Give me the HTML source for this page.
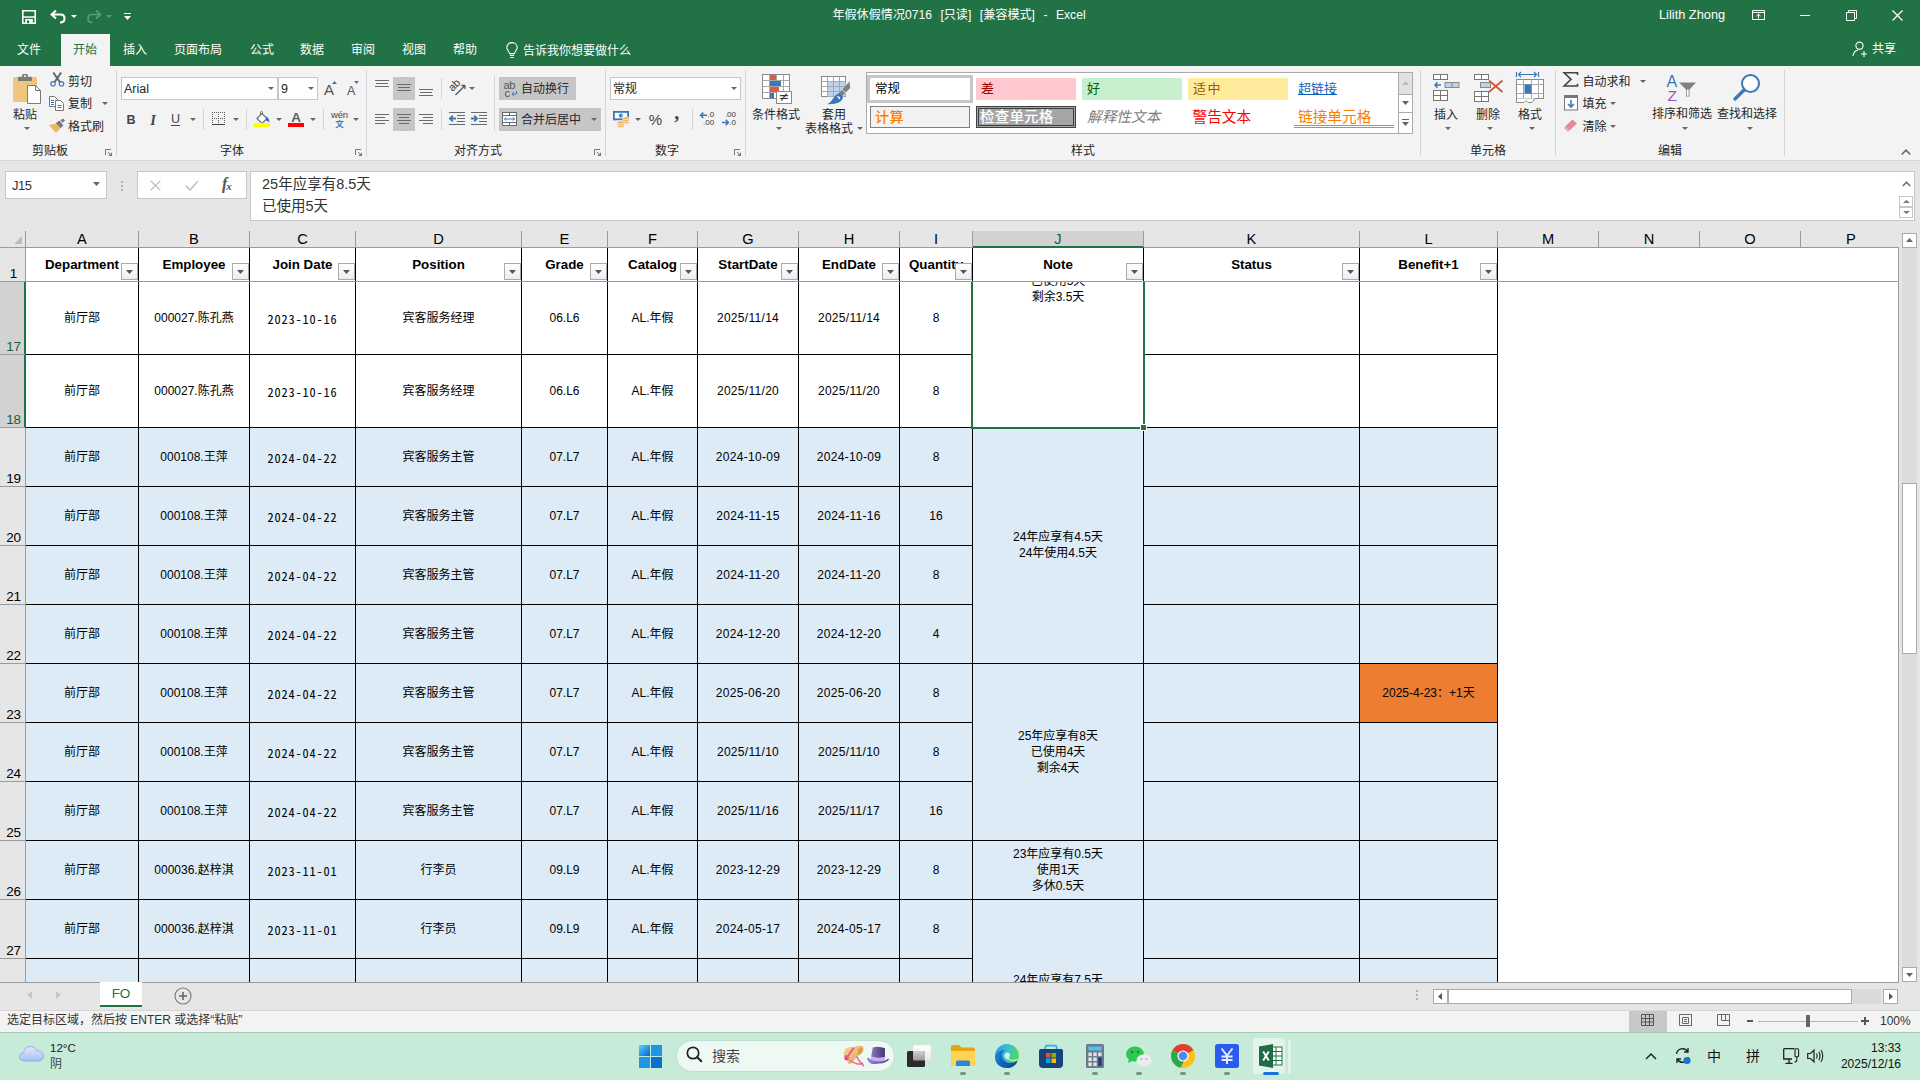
<!DOCTYPE html>
<html lang="zh-CN"><head><meta charset="utf-8"><title>年假休假情况0716 - Excel</title>
<style>
html,body{margin:0;padding:0;}
body{width:1920px;height:1080px;overflow:hidden;background:#e6e6e6;font-family:"Liberation Sans","Noto Sans CJK SC",sans-serif;font-size:12px;color:#000;}
#app{position:relative;width:1920px;height:1080px;overflow:hidden;}
.a{position:absolute;}
.t{position:absolute;white-space:nowrap;}
.c{text-align:center;}
.ui{font-family:"Liberation Sans","Noto Sans CJK SC",sans-serif;color:#262626;}
svg{position:absolute;overflow:visible;}
.jd{font-family:"Noto Sans Mono CJK SC","DejaVu Sans Mono",monospace;font-size:12.3px;letter-spacing:0.85px;}

</style></head>
<body>
<div id="app">
<!-- p_top -->
<div class="a" style="left:0;top:0;width:1920px;height:66px;background:#217346"></div>
<svg style="left:22px;top:10px" width="14" height="14" viewBox="0 0 14 14"><path d="M0.8 0.8H13.2V13.2H0.8Z" fill="none" stroke="#fff" stroke-width="1.6"/><rect x="1" y="6.3" width="12" height="1.5" fill="#fff"/><rect x="3.2" y="9" width="7.6" height="4" fill="#fff"/><rect x="5" y="10.5" width="2.2" height="2.7" fill="#217346"/></svg>
<svg style="left:50px;top:9px" width="18" height="16" viewBox="0 0 18 16"><path d="M6 1.5L1.5 5.5L6 9.5 M2 5.5H10.5C13.5 5.5 14.5 7.5 14.5 9.5C14.5 12 12.5 13.5 10 13.5" fill="none" stroke="#fff" stroke-width="2"/></svg>
<svg style="left:71px;top:15px" width="6" height="3"><path d="M0 0H6L3 3Z" fill="#fff"/></svg>
<svg style="left:85px;top:9px" width="18" height="16" viewBox="0 0 18 16"><path d="M11 1.5L15.5 5.5L11 9.5 M15 5.5H7C4 5.5 3 7.5 3 9.5C3 12 5 13.5 7.5 13.5" fill="none" stroke="#5c9a78" stroke-width="1.7"/></svg>
<svg style="left:106px;top:15px" width="6" height="3"><path d="M0 0H6L3 3Z" fill="#5c9a78"/></svg>
<div class="a" style="left:124px;top:13px;width:7px;height:1px;background:#fff"></div>
<svg style="left:124px;top:16px" width="7" height="4"><path d="M0 0H7L3.5 4Z" fill="#fff"/></svg>
<div class="t c" style="left:659px;top:5px;width:600px;height:20px;line-height:20px;font-size:12.1px;color:#fff;word-spacing:0.9px">年假休假情况0716&nbsp; [只读]&nbsp; [兼容模式]&nbsp; -&nbsp; Excel</div>
<div class="t" style="left:1659px;top:5px;height:20px;line-height:20px;font-size:12.8px;color:#fff">Lilith Zhong</div>
<svg style="left:1752px;top:10px" width="13" height="10" viewBox="0 0 13 10"><path d="M0.5 0.5H12.5V9.5H0.5Z M0.5 2.5H12.5" fill="none" stroke="#fff" stroke-width="1"/><path d="M6.5 4.2V8.5M4.5 6L6.5 4.2L8.5 6" fill="none" stroke="#fff" stroke-width="1"/></svg>
<div class="a" style="left:1800px;top:15px;width:10px;height:1px;background:#fff"></div>
<svg style="left:1846px;top:10px" width="11" height="11" viewBox="0 0 11 11"><path d="M0.5 2.5H8.5V10.5H0.5Z M2.5 2.5V0.5H10.5V8.5H8.5" fill="none" stroke="#fff" stroke-width="1"/></svg>
<svg style="left:1892px;top:10px" width="11" height="11" viewBox="0 0 11 11"><path d="M0.5 0.5L10.5 10.5M10.5 0.5L0.5 10.5" fill="none" stroke="#fff" stroke-width="1.2"/></svg>
<div class="a" style="left:61px;top:34px;width:49px;height:32px;background:#f3f3f3"></div>
<div class="t c" style="left:-11px;top:40px;width:80px;height:20px;line-height:20px;font-size:12px;color:#fff">文件</div>
<div class="t c" style="left:45px;top:40px;width:80px;height:20px;line-height:20px;font-size:12px;color:#217346">开始</div>
<div class="t c" style="left:95px;top:40px;width:80px;height:20px;line-height:20px;font-size:12px;color:#fff">插入</div>
<div class="t c" style="left:158px;top:40px;width:80px;height:20px;line-height:20px;font-size:12px;color:#fff">页面布局</div>
<div class="t c" style="left:222px;top:40px;width:80px;height:20px;line-height:20px;font-size:12px;color:#fff">公式</div>
<div class="t c" style="left:272px;top:40px;width:80px;height:20px;line-height:20px;font-size:12px;color:#fff">数据</div>
<div class="t c" style="left:323px;top:40px;width:80px;height:20px;line-height:20px;font-size:12px;color:#fff">审阅</div>
<div class="t c" style="left:374px;top:40px;width:80px;height:20px;line-height:20px;font-size:12px;color:#fff">视图</div>
<div class="t c" style="left:425px;top:40px;width:80px;height:20px;line-height:20px;font-size:12px;color:#fff">帮助</div>
<svg style="left:505.5px;top:42px" width="12" height="17" viewBox="0 0 12 17"><path d="M6 0.6C3 0.6 0.8 2.8 0.8 5.5C0.8 8 3 9 3.6 11.6H8.4C9 9 11.2 8 11.2 5.5C11.2 2.8 9 0.6 6 0.6Z M3.8 13.5H8.2 M4.4 15.5H7.6" fill="none" stroke="#fff" stroke-width="1.1"/></svg>
<div class="t" style="left:523px;top:41px;height:20px;line-height:20px;font-size:12px;color:#fff">告诉我你想要做什么</div>
<svg style="left:1852px;top:41px" width="16" height="16" viewBox="0 0 16 16"><circle cx="7.5" cy="4.7" r="3.6" fill="none" stroke="#fff" stroke-width="1.1"/><path d="M1 15C1.5 11.5 3.5 9.5 6 9" fill="none" stroke="#fff" stroke-width="1.1"/><path d="M12 10V16M9 13H15" stroke="#fff" stroke-width="1.1"/></svg>
<div class="t" style="left:1872px;top:39px;height:20px;line-height:20px;font-size:12px;color:#fff">共享</div>
<!-- p_ribbon -->
<div class="a" style="left:0px;top:66px;width:1920px;height:94px;background:#f3f3f3"></div>
<div class="a" style="left:0px;top:160px;width:1920px;height:1px;background:#d6d6d6"></div>
<svg style="left:13px;top:74px" width="29" height="31" viewBox="0 0 29 31"><rect x="0" y="3" width="24" height="25" rx="1.5" fill="#eec67c"/><path d="M5 7V3.6Q5 2.8 5.8 2.8H9.2V1.2Q9.2 0 10.4 0H13.6Q14.8 0 14.8 1.2V2.8H18.2Q19 2.8 19 3.6V7Z" fill="#7a7a7a"/><rect x="11" y="1.3" width="2" height="1.6" fill="#f3f3f3"/><path d="M14.5 11.5H22.5L27.5 16.5V29.5H14.5Z" fill="#fff" stroke="#7a7a7a" stroke-width="1"/><path d="M22.5 11.5V16.5H27.5" fill="none" stroke="#7a7a7a" stroke-width="1"/></svg>
<div class="t c" style="left:-35px;top:106.6px;width:120px;height:16px;line-height:16px;font-size:12px;color:#262626;">粘贴</div>
<svg style="left:23.5px;top:127px" width="6" height="3"><path d="M0 0H6L3 3Z" fill="#666"/></svg>
<svg style="left:50px;top:72px" width="15" height="15" viewBox="0 0 15 15"><path d="M3.3 0.5L10.2 10.5M11.2 0.5L4.3 10.5" stroke="#666" stroke-width="2" fill="none"/><circle cx="3" cy="11.8" r="2.2" fill="none" stroke="#3b78b9" stroke-width="1.2"/><circle cx="11.5" cy="11.8" r="2.2" fill="none" stroke="#3b78b9" stroke-width="1.2"/></svg>
<div class="t" style="left:68px;top:73.6px;height:16px;line-height:16px;font-size:12px;color:#262626;">剪切</div>
<svg style="left:49px;top:96px" width="16" height="15" viewBox="0 0 16 15"><path d="M0.5 0.5H5.5L8.5 3.5V10.5H0.5Z" fill="#fff" stroke="#777"/><path d="M6.5 4.5H11.5L14.5 7.5V14.5H6.5Z" fill="#fff" stroke="#777"/><path d="M2 4.5H5M2 6.5H5M2 8.5H5" stroke="#3b78b9"/><path d="M8.5 9.5H12.5M8.5 11.5H12.5" stroke="#3b78b9"/></svg>
<div class="t" style="left:68px;top:96.1px;height:16px;line-height:16px;font-size:12px;color:#262626;">复制</div>
<svg style="left:101.5px;top:102px" width="6" height="3"><path d="M0 0H6L3 3Z" fill="#666"/></svg>
<svg style="left:49px;top:119px" width="17" height="15" viewBox="0 0 17 15"><path d="M0 6L7.3 4.4L11.3 9.5L6.9 13.9Z" fill="#eab765"/><path d="M6.8 4.1L10.4 1.5L14.4 6.5L11.4 9.3Z" fill="#7a7a7a"/><path d="M11.4 1.3L14.2 -0.4L16 1.8L13.3 3.8Z" fill="#7a7a7a"/></svg>
<div class="t" style="left:68px;top:119.1px;height:16px;line-height:16px;font-size:12px;color:#262626;">格式刷</div>
<div class="t c" style="left:-10px;top:142.8px;width:120px;height:16px;line-height:16px;font-size:12px;color:#262626;">剪贴板</div>
<svg style="left:105px;top:149px" width="8" height="8" viewBox="0 0 8 8"><path d="M0.5 6V0.5H6" fill="none" stroke="#777" stroke-width="1"/><path d="M7 3.2V7H3.2Z" fill="#777"/><path d="M3 3L5 5" stroke="#777" stroke-width="1"/></svg>
<div class="a" style="left:116px;top:70px;width:1px;height:86px;background:#d4d4d4"></div>
<div class="a" style="left:121px;top:77px;width:157px;height:23px;background:#fff;border:1px solid #c6c6c6;box-sizing:border-box"></div>
<div class="t" style="left:124px;top:81.1px;height:16px;line-height:16px;font-size:12.5px;color:#262626;">Arial</div>
<svg style="left:267.5px;top:87px" width="6" height="3"><path d="M0 0H6L3 3Z" fill="#666"/></svg>
<div class="a" style="left:278px;top:77px;width:40px;height:23px;background:#fff;border:1px solid #c6c6c6;box-sizing:border-box"></div>
<div class="t" style="left:281px;top:81.1px;height:16px;line-height:16px;font-size:12.5px;color:#262626;">9</div>
<svg style="left:307.5px;top:87px" width="6" height="3"><path d="M0 0H6L3 3Z" fill="#666"/></svg>
<div class="t" style="left:324px;top:82.1px;height:16px;line-height:16px;font-size:15px;color:#555;">A</div>
<svg style="left:332px;top:81px" width="5" height="3" viewBox="0 0 5 3"><path d="M0 3H5L2.5 0Z" fill="#3b78b9"/></svg>
<div class="t" style="left:347px;top:83.1px;height:16px;line-height:16px;font-size:12.5px;color:#555;">A</div>
<svg style="left:354px;top:81px" width="5" height="3" viewBox="0 0 5 3"><path d="M0 0H5L2.5 3Z" fill="#3b78b9"/></svg>
<div class="t c" style="left:121px;top:111.6px;width:20px;height:16px;line-height:16px;font-size:12.5px;color:#444;font-weight:bold">B</div>
<div class="t c" style="left:143px;top:111.6px;width:20px;height:16px;line-height:16px;font-size:14.5px;color:#444;font-style:italic;font-family:'Liberation Serif',serif;font-weight:bold">I</div>
<div class="t c" style="left:165.5px;top:111.1px;width:20px;height:16px;line-height:16px;font-size:12.5px;color:#444;">U</div>
<div class="a" style="left:171px;top:125px;width:9px;height:1px;background:#444"></div>
<svg style="left:189.5px;top:118px" width="6" height="3"><path d="M0 0H6L3 3Z" fill="#666"/></svg>
<div class="a" style="left:203px;top:109px;width:1px;height:21px;background:#d4d4d4"></div>
<svg style="left:212px;top:112px" width="14" height="14" viewBox="0 0 14 14"><path d="M0 0h1v1h-1zM0 10h1v1h-1zM0 12h1v1h-1zM0 2h1v1h-1zM0 4h1v1h-1zM0 6h1v1h-1zM0 8h1v1h-1zM10 0h1v1h-1zM10 6h1v1h-1zM12 0h1v1h-1zM12 10h1v1h-1zM12 12h1v1h-1zM12 2h1v1h-1zM12 4h1v1h-1zM12 6h1v1h-1zM12 8h1v1h-1zM2 0h1v1h-1zM2 6h1v1h-1zM4 0h1v1h-1zM4 6h1v1h-1zM6 0h1v1h-1zM6 10h1v1h-1zM6 12h1v1h-1zM6 2h1v1h-1zM6 4h1v1h-1zM6 6h1v1h-1zM6 8h1v1h-1zM8 0h1v1h-1zM8 6h1v1h-1z" fill="#5a5a5a"/><rect x="0" y="12" width="13" height="1" fill="#444"/></svg>
<svg style="left:232.5px;top:118px" width="6" height="3"><path d="M0 0H6L3 3Z" fill="#666"/></svg>
<div class="a" style="left:246px;top:109px;width:1px;height:21px;background:#d4d4d4"></div>
<svg style="left:254px;top:111px" width="17" height="17" viewBox="0 0 17 17"><path d="M3 7.5L8 2.5L13 7.5L8 12.5Z" fill="#fff" stroke="#6a6a6a" stroke-width="1.1"/><path d="M6.5 4V1.5Q6.5 0.5 7.5 0.5Q8.5 0.5 8.5 1.5V3" fill="none" stroke="#6a6a6a" stroke-width="1"/><path d="M12 5.5Q16 7 15.2 11.5Q13.5 9.5 11.5 9.5Z" fill="#3b78b9"/><rect x="0" y="12" width="16" height="4" fill="#ffff00"/></svg>
<svg style="left:275.5px;top:118px" width="6" height="3"><path d="M0 0H6L3 3Z" fill="#666"/></svg>
<div class="t c" style="left:286px;top:109.8px;width:20px;height:16px;line-height:16px;font-size:13.5px;color:#5f5f5f;font-weight:bold">A</div>
<div class="a" style="left:288px;top:123px;width:16px;height:4px;background:#ff0000"></div>
<svg style="left:309.5px;top:118px" width="6" height="3"><path d="M0 0H6L3 3Z" fill="#666"/></svg>
<div class="a" style="left:323px;top:109px;width:1px;height:21px;background:#d4d4d4"></div>
<div class="t c" style="left:324.5px;top:107.1px;width:30px;height:16px;line-height:16px;font-size:9.5px;color:#3f3f3f;letter-spacing:-0.2px">wén</div>
<div class="t c" style="left:324.5px;top:115.8px;width:30px;height:16px;line-height:16px;font-size:8.5px;color:#3b78b9;font-weight:bold">文</div>
<svg style="left:352.5px;top:118px" width="6" height="3"><path d="M0 0H6L3 3Z" fill="#666"/></svg>
<div class="t c" style="left:172px;top:142.8px;width:120px;height:16px;line-height:16px;font-size:12px;color:#262626;">字体</div>
<svg style="left:355px;top:149px" width="8" height="8" viewBox="0 0 8 8"><path d="M0.5 6V0.5H6" fill="none" stroke="#777" stroke-width="1"/><path d="M7 3.2V7H3.2Z" fill="#777"/><path d="M3 3L5 5" stroke="#777" stroke-width="1"/></svg>
<div class="a" style="left:366px;top:70px;width:1px;height:86px;background:#d4d4d4"></div>
<div class="a" style="left:393px;top:77px;width:22px;height:23px;background:#c6c6c6"></div>
<div class="a" style="left:393px;top:108px;width:22px;height:23px;background:#c6c6c6"></div>
<div class="a" style="left:375px;top:80px;width:14px;height:1px;background:#6a6a6a"></div>
<div class="a" style="left:376px;top:83px;width:12px;height:1px;background:#6a6a6a"></div>
<div class="a" style="left:375px;top:86px;width:14px;height:1px;background:#6a6a6a"></div>
<div class="a" style="left:397px;top:84px;width:14px;height:1px;background:#6a6a6a"></div>
<div class="a" style="left:398px;top:87px;width:12px;height:1px;background:#6a6a6a"></div>
<div class="a" style="left:397px;top:90px;width:14px;height:1px;background:#6a6a6a"></div>
<div class="a" style="left:419px;top:89px;width:14px;height:1px;background:#6a6a6a"></div>
<div class="a" style="left:420px;top:92px;width:12px;height:1px;background:#6a6a6a"></div>
<div class="a" style="left:419px;top:95px;width:14px;height:1px;background:#6a6a6a"></div>
<div class="a" style="left:441px;top:78px;width:1px;height:21px;background:#d4d4d4"></div>
<svg style="left:448px;top:78px" width="20" height="20" viewBox="0 0 20 20"><path d="M7.5 17L17 7.5M17 7.5H13.4M17 7.5V11.1" stroke="#555" stroke-width="1.3" fill="none"/><text x="0" y="0" font-size="11" font-family="Liberation Sans" fill="#3b3b3b" transform="translate(4.4,14) rotate(-45)">ab</text></svg>
<svg style="left:468.5px;top:87px" width="6" height="3"><path d="M0 0H6L3 3Z" fill="#666"/></svg>
<div class="a" style="left:494px;top:76px;width:1px;height:55px;background:#d4d4d4"></div>
<div class="a" style="left:499px;top:77px;width:77px;height:23px;background:#c6c6c6"></div>
<div class="t" style="left:503.5px;top:77.1px;height:16px;line-height:16px;font-size:11px;color:#555;letter-spacing:-0.3px">ab</div>
<div class="t" style="left:504.5px;top:85.1px;height:16px;line-height:16px;font-size:11px;color:#555;">c</div>
<svg style="left:510.5px;top:90.5px" width="6" height="5" viewBox="0 0 6 5"><path d="M5.5 0V3H1.5M3 1.2L1 3L3 4.8" stroke="#3b78b9" stroke-width="1" fill="none"/></svg>
<div class="t" style="left:521px;top:81.1px;height:16px;line-height:16px;font-size:12px;color:#262626;">自动换行</div>
<div class="a" style="left:375px;top:114px;width:14px;height:1px;background:#6a6a6a"></div>
<div class="a" style="left:375px;top:117px;width:10px;height:1px;background:#6a6a6a"></div>
<div class="a" style="left:375px;top:120px;width:14px;height:1px;background:#6a6a6a"></div>
<div class="a" style="left:375px;top:123px;width:10px;height:1px;background:#6a6a6a"></div>
<div class="a" style="left:397px;top:114px;width:14px;height:1px;background:#6a6a6a"></div>
<div class="a" style="left:399px;top:117px;width:10px;height:1px;background:#6a6a6a"></div>
<div class="a" style="left:397px;top:120px;width:14px;height:1px;background:#6a6a6a"></div>
<div class="a" style="left:399px;top:123px;width:10px;height:1px;background:#6a6a6a"></div>
<div class="a" style="left:419px;top:114px;width:14px;height:1px;background:#6a6a6a"></div>
<div class="a" style="left:423px;top:117px;width:10px;height:1px;background:#6a6a6a"></div>
<div class="a" style="left:419px;top:120px;width:14px;height:1px;background:#6a6a6a"></div>
<div class="a" style="left:423px;top:123px;width:10px;height:1px;background:#6a6a6a"></div>
<div class="a" style="left:441px;top:109px;width:1px;height:21px;background:#d4d4d4"></div>
<svg style="left:449px;top:112px" width="17" height="14" viewBox="0 0 17 14"><path d="M0 0.5H16M8 3.5H16M8 6.5H16M8 9.5H16M0 12.5H16" stroke="#6a6a6a" stroke-width="1"/><path d="M7 6.5H1M3.8 3.6L0.9 6.5L3.8 9.4" stroke="#3b78b9" stroke-width="1.8" fill="none"/></svg>
<svg style="left:471px;top:112px" width="17" height="14" viewBox="0 0 17 14"><path d="M0 0.5H16M8 3.5H16M8 6.5H16M8 9.5H16M0 12.5H16" stroke="#6a6a6a" stroke-width="1"/><path d="M0 6.5H6M3.2 3.6L6.1 6.5L3.2 9.4" stroke="#3b78b9" stroke-width="1.8" fill="none"/></svg>
<div class="a" style="left:499px;top:108px;width:102px;height:23px;background:#c6c6c6"></div>
<svg style="left:502px;top:112px" width="15" height="14" viewBox="0 0 15 14"><rect x="0.5" y="0.5" width="14" height="13" fill="#fff" stroke="#6a6a6a"/><path d="M0.5 3.5H14.5M0.5 10.5H14.5M7.5 0.5V3.5M7.5 10.5V13.5" stroke="#6a6a6a"/><path d="M2.5 7H12.5M4.3 5.3L2.5 7L4.3 8.7M10.7 5.3L12.5 7L10.7 8.7" stroke="#3b78b9" stroke-width="1" fill="none"/></svg>
<div class="t" style="left:521px;top:112.1px;height:16px;line-height:16px;font-size:12px;color:#262626;">合并后居中</div>
<svg style="left:590.5px;top:118px" width="6" height="3"><path d="M0 0H6L3 3Z" fill="#666"/></svg>
<div class="t c" style="left:418px;top:142.8px;width:120px;height:16px;line-height:16px;font-size:12px;color:#262626;">对齐方式</div>
<svg style="left:594px;top:149px" width="8" height="8" viewBox="0 0 8 8"><path d="M0.5 6V0.5H6" fill="none" stroke="#777" stroke-width="1"/><path d="M7 3.2V7H3.2Z" fill="#777"/><path d="M3 3L5 5" stroke="#777" stroke-width="1"/></svg>
<div class="a" style="left:605px;top:70px;width:1px;height:86px;background:#d4d4d4"></div>
<div class="a" style="left:610px;top:77px;width:131px;height:23px;background:#fff;border:1px solid #c6c6c6;box-sizing:border-box"></div>
<div class="t" style="left:613px;top:81.1px;height:16px;line-height:16px;font-size:12px;color:#262626;">常规</div>
<svg style="left:730.5px;top:87px" width="6" height="3"><path d="M0 0H6L3 3Z" fill="#666"/></svg>
<svg style="left:613px;top:111px" width="17" height="17" viewBox="0 0 17 17"><rect x="0.9" y="0.9" width="14.2" height="7.4" fill="#fff" stroke="#3b78b9" stroke-width="1.8"/><path d="M0 0H2.6L0 2.6ZM16 0H13.4L16 2.6ZM0 9.2H2.6L0 6.6Z" fill="#3b78b9"/><circle cx="8" cy="4.6" r="2.1" fill="#3b78b9"/><path d="M8.6 3.6A1 1 0 1 1 8.6 5.6" fill="#fff"/><g fill="#eab765" stroke="#f3f3f3" stroke-width=".6"><ellipse cx="12.7" cy="11.3" rx="3.5" ry="1.4"/><ellipse cx="12.7" cy="9.3" rx="3.5" ry="1.4"/><ellipse cx="12.7" cy="7.3" rx="3.5" ry="1.4"/><ellipse cx="7.7" cy="15.2" rx="3.5" ry="1.4"/><ellipse cx="7.7" cy="13.2" rx="3.5" ry="1.4"/><ellipse cx="7.7" cy="11.4" rx="3.5" ry="1.4"/></g></svg>
<svg style="left:634.5px;top:118px" width="6" height="3"><path d="M0 0H6L3 3Z" fill="#666"/></svg>
<div class="t c" style="left:645.5px;top:112.1px;width:20px;height:16px;line-height:16px;font-size:15px;color:#444;">%</div>
<div class="t c" style="left:670.5px;top:114.9px;width:12px;height:16px;line-height:16px;font-size:20px;color:#444;font-weight:bold;font-family:'Liberation Serif',serif">’</div>
<div class="a" style="left:692px;top:109px;width:1px;height:21px;background:#d4d4d4"></div>
<svg style="left:700px;top:111px" width="15" height="16" viewBox="0 0 15 16"><path d="M0.6 4.3H7M3.3 1.6L0.6 4.3L3.3 7" stroke="#3b78b9" stroke-width="1.5" fill="none"/><text x="14.2" y="6.3" font-size="8" text-anchor="end" font-family="Liberation Sans" fill="#333">.0</text><text x="14.2" y="13.9" font-size="8" text-anchor="end" font-family="Liberation Sans" fill="#333">.00</text></svg>
<svg style="left:722px;top:111px" width="15" height="16" viewBox="0 0 15 16"><text x="14" y="6.3" font-size="8" text-anchor="end" font-family="Liberation Sans" fill="#333">.00</text><path d="M0 11.4H6.4M3.7 8.7L6.4 11.4L3.7 14.1" stroke="#3b78b9" stroke-width="1.5" fill="none"/><text x="14" y="13.9" font-size="8" text-anchor="end" font-family="Liberation Sans" fill="#333">.0</text></svg>
<div class="t c" style="left:607px;top:142.8px;width:120px;height:16px;line-height:16px;font-size:12px;color:#262626;">数字</div>
<svg style="left:734px;top:149px" width="8" height="8" viewBox="0 0 8 8"><path d="M0.5 6V0.5H6" fill="none" stroke="#777" stroke-width="1"/><path d="M7 3.2V7H3.2Z" fill="#777"/><path d="M3 3L5 5" stroke="#777" stroke-width="1"/></svg>
<div class="a" style="left:745px;top:70px;width:1px;height:86px;background:#d4d4d4"></div>
<svg style="left:762px;top:74px" width="31" height="30" viewBox="0 0 31 30"><rect x="0.5" y="0.5" width="27" height="24" fill="#fff" stroke="#8a8a8a"/><path d="M7.5 0.5V24.5M14.5 0.5V24.5M21.5 0.5V24.5M0.5 6.5H27.5M0.5 12.5H27.5M0.5 18.5H27.5" stroke="#a8a8a8"/><rect x="8" y="1" width="6" height="5" fill="#d95f43"/><rect x="8" y="7" width="11" height="5" fill="#3b78b9"/><rect x="8" y="13" width="9" height="5" fill="#d95f43"/><rect x="8" y="19" width="4" height="5" fill="#3b78b9"/><rect x="14.5" y="17.5" width="15" height="12" fill="#fff" stroke="#8a8a8a"/><text x="22" y="27.4" font-size="12.5" text-anchor="middle" font-family="DejaVu Sans" fill="#333">≠</text></svg>
<div class="t c" style="left:716px;top:106.6px;width:120px;height:16px;line-height:16px;font-size:12px;color:#262626;">条件格式</div>
<svg style="left:775.5px;top:127px" width="6" height="3"><path d="M0 0H6L3 3Z" fill="#666"/></svg>
<svg style="left:821px;top:76px" width="30" height="29" viewBox="0 0 30 29"><rect x="0.5" y="0.5" width="24" height="20" fill="#fff" stroke="#8a8a8a"/><rect x="6.5" y="5.5" width="18" height="15" fill="#bdd3ec"/><path d="M6.5 0.5V20.5M12.5 0.5V20.5M18.5 0.5V20.5M0.5 5.5H24.5M0.5 10.5H24.5M0.5 15.5H24.5" stroke="#a8a8a8"/><path d="M28.4 5.6L29.2 12L21.6 19.6L18.3 16.9Z" fill="#808080"/><path d="M21.2 13.6L24.8 17.2" stroke="#f3f3f3" stroke-width="0.9"/><path d="M18.3 16.9Q14 18.5 12 22.5Q10 26.5 6.3 28.2Q15 28.6 19.5 25.5Q22.5 23 21.6 19.6Z" fill="#3b78b9"/><path d="M15.6 20.6Q17.5 19.6 19 21.2Q19.4 22.8 18.6 23.6Q17.6 22 15.6 20.6Z" fill="#fff"/></svg>
<div class="t c" style="left:774px;top:106.6px;width:120px;height:16px;line-height:16px;font-size:12px;color:#262626;">套用</div>
<div class="t c" style="left:769px;top:120.6px;width:120px;height:16px;line-height:16px;font-size:12px;color:#262626;">表格格式</div>
<svg style="left:856.5px;top:127px" width="6" height="3"><path d="M0 0H6L3 3Z" fill="#666"/></svg>
<div class="a" style="left:866px;top:72px;width:547px;height:62px;background:#fff;border:1px solid #ababab;box-sizing:border-box"></div>
<div class="a" style="left:1398px;top:72px;width:1px;height:62px;background:#ababab"></div>
<div class="a" style="left:1399px;top:73px;width:13px;height:21px;background:#e1e1e1"></div>
<div class="a" style="left:1399px;top:94px;width:13px;height:1px;background:#ababab"></div>
<div class="a" style="left:1399px;top:112px;width:13px;height:1px;background:#ababab"></div>
<svg style="left:1402px;top:81px" width="7" height="4" viewBox="0 0 7 4"><path d="M0 4H7L3.5 0Z" fill="#bcbcbc"/></svg>
<svg style="left:1402px;top:101px" width="7" height="4" viewBox="0 0 7 4"><path d="M0 0H7L3.5 4Z" fill="#666"/></svg>
<div class="a" style="left:1402px;top:119px;width:7px;height:1px;background:#666"></div>
<svg style="left:1402px;top:122px" width="7" height="4" viewBox="0 0 7 4"><path d="M0 0H7L3.5 4Z" fill="#666"/></svg>
<div class="a" style="left:867px;top:75px;width:106px;height:28px;background:#fff;border:3px solid #c6c6c6;box-sizing:border-box"></div>
<div class="t" style="left:875px;top:81.1px;height:16px;line-height:16px;font-size:12.5px;color:#000;">常规</div>
<div class="a" style="left:976px;top:78px;width:100px;height:22px;background:#ffc7ce"></div>
<div class="t" style="left:981px;top:81.1px;height:16px;line-height:16px;font-size:13px;color:#9c0006;">差</div>
<div class="a" style="left:1082px;top:78px;width:100px;height:22px;background:#c6efce"></div>
<div class="t" style="left:1087px;top:81.1px;height:16px;line-height:16px;font-size:13px;color:#006100;">好</div>
<div class="a" style="left:1188px;top:78px;width:100px;height:22px;background:#ffeb9c"></div>
<div class="t" style="left:1193px;top:81.1px;height:16px;line-height:16px;font-size:13px;color:#9c5700;letter-spacing:1.5px">适中</div>
<div class="t" style="left:1298px;top:81.1px;height:16px;line-height:16px;font-size:13px;color:#0563c1;text-decoration:underline">超链接</div>
<div class="a" style="left:870px;top:106px;width:100px;height:22px;background:#f2f2f2;border:1px solid #7f7f7f;box-sizing:border-box"></div>
<div class="t" style="left:875px;top:109.1px;height:16px;line-height:16px;font-size:14px;color:#fa7d00;font-weight:500;letter-spacing:0.5px">计算</div>
<div class="a" style="left:976px;top:106px;width:100px;height:22px;background:#a5a5a5;border:3px double #3f3f3f;box-sizing:border-box"></div>
<div class="t" style="left:980px;top:109.1px;height:16px;line-height:16px;font-size:14.5px;color:#fff;font-weight:500;letter-spacing:0.2px">检查单元格</div>
<div class="t" style="left:1087px;top:109.1px;height:16px;line-height:16px;font-size:14.67px;color:#7f7f7f;font-style:italic">解释性文本</div>
<div class="t" style="left:1192.5px;top:109.1px;height:16px;line-height:16px;font-size:14.67px;color:#ff0000;">警告文本</div>
<div class="t" style="left:1298px;top:109.1px;height:16px;line-height:16px;font-size:14.67px;color:#fa7d00;">链接单元格</div>
<div class="a" style="left:1294px;top:125px;width:100px;height:1px;background:#ff8001"></div>
<div class="a" style="left:1294px;top:127px;width:100px;height:1px;background:#ff8001"></div>
<div class="t c" style="left:1023px;top:142.8px;width:120px;height:16px;line-height:16px;font-size:12px;color:#262626;">样式</div>
<div class="a" style="left:1420px;top:70px;width:1px;height:86px;background:#d4d4d4"></div>
<svg style="left:1433px;top:74px" width="27" height="27" viewBox="0 0 27 27"><rect x="0.5" y="0.5" width="14" height="5" fill="#fff" stroke="#777"/><path d="M7.5 0.5V5.5" stroke="#777"/><rect x="12" y="8.5" width="14" height="5" fill="#bdd3ec" stroke="#8a8a8a"/><path d="M19 8.5V13.5" stroke="#8a8a8a"/><path d="M2 11H8M4.5 8.3L2 11L4.5 13.7" stroke="#3b78b9" stroke-width="1.5" fill="none"/><rect x="0.5" y="16.5" width="14" height="10" fill="#fff" stroke="#777"/><path d="M7.5 16.5V26.5M0.5 21.5H14.5" stroke="#777"/></svg>
<div class="t c" style="left:1386px;top:106.6px;width:120px;height:16px;line-height:16px;font-size:12px;color:#262626;">插入</div>
<svg style="left:1444.5px;top:127px" width="6" height="3"><path d="M0 0H6L3 3Z" fill="#666"/></svg>
<svg style="left:1474px;top:74px" width="30" height="28" viewBox="0 0 30 28"><rect x="0.5" y="0.5" width="14" height="5" fill="#fff" stroke="#777"/><path d="M7.5 0.5V5.5" stroke="#777"/><rect x="6.5" y="8.5" width="10" height="5" fill="#bdd3ec" stroke="#8a8a8a"/><rect x="0.5" y="17.5" width="14" height="10" fill="#fff" stroke="#777"/><path d="M7.5 17.5V27.5M0.5 22.5H14.5" stroke="#777"/><path d="M15 6.5L28.5 18M28.5 6.5L15 18" stroke="#d8573a" stroke-width="1.8" fill="none"/></svg>
<div class="t c" style="left:1428px;top:106.6px;width:120px;height:16px;line-height:16px;font-size:12px;color:#262626;">删除</div>
<svg style="left:1486.5px;top:127px" width="6" height="3"><path d="M0 0H6L3 3Z" fill="#666"/></svg>
<svg style="left:1516px;top:72px" width="29" height="32" viewBox="0 0 29 32"><path d="M0.5 0V5M22.5 0V5M2.5 2.5H20.5M5 0L2.5 2.5L5 5M18 0L20.5 2.5L18 5" stroke="#3b78b9" stroke-width="1.2" fill="none"/><rect x="0.5" y="7.5" width="27" height="19" fill="#fff" stroke="#8a8a8a"/><path d="M7.5 7.5V26.5M15.5 7.5V26.5M22.5 7.5V26.5M0.5 12.5H27.5M0.5 21.5H27.5" stroke="#a8a8a8"/><rect x="8.5" y="12.5" width="7" height="9" fill="#3b78b9"/><path d="M0.5 26.5V30.5H8L10 28.5L12 30.5H16L19 26.5" fill="#fff" stroke="#8a8a8a"/></svg>
<div class="t c" style="left:1470px;top:106.6px;width:120px;height:16px;line-height:16px;font-size:12px;color:#262626;">格式</div>
<svg style="left:1528.5px;top:127px" width="6" height="3"><path d="M0 0H6L3 3Z" fill="#666"/></svg>
<div class="t c" style="left:1428px;top:142.8px;width:120px;height:16px;line-height:16px;font-size:12px;color:#262626;">单元格</div>
<div class="a" style="left:1555px;top:70px;width:1px;height:86px;background:#d4d4d4"></div>
<svg style="left:1563px;top:72px" width="16" height="15" viewBox="0 0 16 15"><path d="M14.5 3V0.8H1.2L8 7.3L1.2 14H14.5V11.8" fill="none" stroke="#444" stroke-width="1.6"/></svg>
<div class="t" style="left:1582.5px;top:73.7px;height:16px;line-height:16px;font-size:12px;color:#262626;">自动求和</div>
<svg style="left:1639.5px;top:79.5px" width="6" height="3"><path d="M0 0H6L3 3Z" fill="#666"/></svg>
<svg style="left:1564px;top:95px" width="15" height="16" viewBox="0 0 15 16"><rect x="0.5" y="0.5" width="13" height="14.5" fill="#fff" stroke="#777"/><rect x="0" y="0" width="14" height="3" fill="#777"/><path d="M7 5V12M4 9L7 12L10 9" stroke="#3b78b9" stroke-width="1.6" fill="none"/></svg>
<div class="t" style="left:1582.5px;top:96.1px;height:16px;line-height:16px;font-size:12px;color:#262626;">填充</div>
<svg style="left:1609.5px;top:102px" width="6" height="3"><path d="M0 0H6L3 3Z" fill="#666"/></svg>
<svg style="left:1564px;top:119px" width="14" height="13" viewBox="0 0 14 13"><path d="M8.5 0.5L13 4.5L5.5 11.5L1 7.5Z" fill="#e8889e"/><path d="M1 7.5L5.5 11.5L4 12.8L0 9Z" fill="#f0a3b5"/></svg>
<div class="t" style="left:1582.5px;top:119.1px;height:16px;line-height:16px;font-size:12px;color:#262626;">清除</div>
<svg style="left:1609.5px;top:125px" width="6" height="3"><path d="M0 0H6L3 3Z" fill="#666"/></svg>
<div class="t" style="left:1666.5px;top:73.6px;height:16px;line-height:16px;font-size:16px;color:#3b78b9;">A</div>
<div class="t" style="left:1667.5px;top:88.1px;height:16px;line-height:16px;font-size:15.5px;color:#9a57b8;">Z</div>
<svg style="left:1679px;top:82px" width="18" height="15" viewBox="0 0 18 15"><path d="M0 0.5H17L10.5 7.5V14.5H7V7.5Z" fill="#808080"/><rect x="7.8" y="7.5" width="1.8" height="6.3" fill="#fff"/></svg>
<div class="t c" style="left:1622px;top:106.1px;width:120px;height:16px;line-height:16px;font-size:12px;color:#262626;">排序和筛选</div>
<svg style="left:1681.5px;top:127px" width="6" height="3"><path d="M0 0H6L3 3Z" fill="#666"/></svg>
<svg style="left:1733px;top:74px" width="28" height="28" viewBox="0 0 28 28"><circle cx="17.5" cy="9.5" r="8.5" fill="#fff" stroke="#3b78b9" stroke-width="2"/><path d="M11 16L2 25" stroke="#3b78b9" stroke-width="3.4" stroke-linecap="round"/></svg>
<div class="t c" style="left:1687px;top:106.1px;width:120px;height:16px;line-height:16px;font-size:12px;color:#262626;">查找和选择</div>
<svg style="left:1746.5px;top:127px" width="6" height="3"><path d="M0 0H6L3 3Z" fill="#666"/></svg>
<div class="t c" style="left:1610px;top:142.8px;width:120px;height:16px;line-height:16px;font-size:12px;color:#262626;">编辑</div>
<div class="a" style="left:1784px;top:70px;width:1px;height:86px;background:#d4d4d4"></div>
<svg style="left:1901px;top:149px" width="10" height="6" viewBox="0 0 10 6"><path d="M0.7 5.5L5 1.2L9.3 5.5" fill="none" stroke="#666" stroke-width="1.6"/></svg>
<!-- p_formula -->
<div class="a" style="left:5px;top:171px;width:102px;height:28px;background:#fff;border:1px solid #c6c6c6;box-sizing:border-box"></div>
<div class="t" style="left:12px;top:177px;height:18px;line-height:18px;font-size:13px;letter-spacing:-0.5px;color:#333">J15</div>
<svg style="left:93px;top:182px" width="7" height="4"><path d="M0 0H7L3.5 4Z" fill="#666"/></svg>
<div class="a" style="left:121px;top:181px;width:2px;height:2px;background:#b0b0b0"></div>
<div class="a" style="left:121px;top:185px;width:2px;height:2px;background:#b0b0b0"></div>
<div class="a" style="left:121px;top:189px;width:2px;height:2px;background:#b0b0b0"></div>
<div class="a" style="left:137px;top:171px;width:110px;height:28px;background:#fff;border:1px solid #c6c6c6;box-sizing:border-box"></div>
<svg style="left:150px;top:180px" width="11" height="11" viewBox="0 0 11 11"><path d="M0.7 0.7L10.3 10.3M10.3 0.7L0.7 10.3" stroke="#c6c6c6" stroke-width="1.5" fill="none"/></svg>
<svg style="left:185px;top:180px" width="14" height="11" viewBox="0 0 14 11"><path d="M1 6L5 10L13 1" stroke="#c6c6c6" stroke-width="1.8" fill="none"/></svg>
<div class="t" style="left:222px;top:175px;height:18px;line-height:18px;font-size:15px;font-style:italic;font-family:'Liberation Serif',serif;font-weight:bold;color:#555"><span style="font-size:16px">f</span><span style="font-size:11px;position:relative;top:1px;left:-1px">x</span></div>
<div class="a" style="left:250px;top:171px;width:1665px;height:50px;background:#fff;border:1px solid #c6c6c6;box-sizing:border-box"></div>
<div class="t" style="left:262px;top:174px;line-height:21.5px;font-size:14.5px;color:#333;white-space:pre">25年应享有8.5天
已使用5天</div>
<svg style="left:1902px;top:181px" width="9" height="6" viewBox="0 0 9 6"><path d="M0.8 5L4.5 1.3L8.2 5" fill="none" stroke="#666" stroke-width="1.5"/></svg>
<div class="a" style="left:1899px;top:196px;width:14px;height:11px;background:#fff;border:1px solid #c6c6c6;box-sizing:border-box"></div>
<div class="a" style="left:1899px;top:207px;width:14px;height:11px;background:#fff;border:1px solid #c6c6c6;box-sizing:border-box"></div>
<svg style="left:1903px;top:200px" width="7" height="3"><path d="M0 3H7L3.5 0Z" fill="#777"/></svg>
<svg style="left:1903px;top:211px" width="7" height="3"><path d="M0 0H7L3.5 3Z" fill="#777"/></svg>
<!-- p_grid -->
<div class="a" style="left:0;top:230px;width:1898px;height:753px;background:#fff"></div>
<div class="a" style="left:0;top:230px;width:1898px;height:17px;background:#e6e6e6"></div>
<div class="a" style="left:0;top:247px;width:1898px;height:1px;background:#9b9b9b"></div>
<div class="a" style="left:0;top:248px;width:25px;height:735px;background:#e6e6e6"></div>
<div class="a" style="left:0;top:282px;width:24px;height:145px;background:#d2d2d2"></div>
<div class="a" style="left:973px;top:231px;width:170px;height:15px;background:#d2d2d2"></div>
<div class="a" style="left:973px;top:246px;width:171px;height:2px;background:#217346"></div>
<svg style="left:14px;top:236px" width="8" height="8"><path d="M8 0V8H0Z" fill="#bdbdbd"/></svg>
<div class="t c" style="left:26px;top:230px;width:112px;height:17px;line-height:18px;font-size:14.67px;color:#000">A</div>
<div class="t c" style="left:139px;top:230px;width:110px;height:17px;line-height:18px;font-size:14.67px;color:#000">B</div>
<div class="t c" style="left:250px;top:230px;width:105px;height:17px;line-height:18px;font-size:14.67px;color:#000">C</div>
<div class="t c" style="left:356px;top:230px;width:165px;height:17px;line-height:18px;font-size:14.67px;color:#000">D</div>
<div class="t c" style="left:522px;top:230px;width:85px;height:17px;line-height:18px;font-size:14.67px;color:#000">E</div>
<div class="t c" style="left:608px;top:230px;width:89px;height:17px;line-height:18px;font-size:14.67px;color:#000">F</div>
<div class="t c" style="left:698px;top:230px;width:100px;height:17px;line-height:18px;font-size:14.67px;color:#000">G</div>
<div class="t c" style="left:799px;top:230px;width:100px;height:17px;line-height:18px;font-size:14.67px;color:#000">H</div>
<div class="t c" style="left:900px;top:230px;width:72px;height:17px;line-height:18px;font-size:14.67px;color:#000">I</div>
<div class="t c" style="left:973px;top:230px;width:170px;height:17px;line-height:18px;font-size:14.67px;color:#1e5c3a">J</div>
<div class="t c" style="left:1144px;top:230px;width:215px;height:17px;line-height:18px;font-size:14.67px;color:#000">K</div>
<div class="t c" style="left:1360px;top:230px;width:137px;height:17px;line-height:18px;font-size:14.67px;color:#000">L</div>
<div class="t c" style="left:1498px;top:230px;width:100px;height:17px;line-height:18px;font-size:14.67px;color:#000">M</div>
<div class="t c" style="left:1599px;top:230px;width:100px;height:17px;line-height:18px;font-size:14.67px;color:#000">N</div>
<div class="t c" style="left:1700px;top:230px;width:100px;height:17px;line-height:18px;font-size:14.67px;color:#000">O</div>
<div class="t c" style="left:1801px;top:230px;width:100px;height:17px;line-height:18px;font-size:14.67px;color:#000">P</div>
<div class="a" style="left:25px;top:231px;width:1px;height:16px;background:#9b9b9b"></div>
<div class="a" style="left:138px;top:231px;width:1px;height:16px;background:#9b9b9b"></div>
<div class="a" style="left:249px;top:231px;width:1px;height:16px;background:#9b9b9b"></div>
<div class="a" style="left:355px;top:231px;width:1px;height:16px;background:#9b9b9b"></div>
<div class="a" style="left:521px;top:231px;width:1px;height:16px;background:#9b9b9b"></div>
<div class="a" style="left:607px;top:231px;width:1px;height:16px;background:#9b9b9b"></div>
<div class="a" style="left:697px;top:231px;width:1px;height:16px;background:#9b9b9b"></div>
<div class="a" style="left:798px;top:231px;width:1px;height:16px;background:#9b9b9b"></div>
<div class="a" style="left:899px;top:231px;width:1px;height:16px;background:#9b9b9b"></div>
<div class="a" style="left:972px;top:231px;width:1px;height:16px;background:#9b9b9b"></div>
<div class="a" style="left:1143px;top:231px;width:1px;height:16px;background:#9b9b9b"></div>
<div class="a" style="left:1359px;top:231px;width:1px;height:16px;background:#9b9b9b"></div>
<div class="a" style="left:1497px;top:231px;width:1px;height:16px;background:#9b9b9b"></div>
<div class="a" style="left:1598px;top:231px;width:1px;height:16px;background:#9b9b9b"></div>
<div class="a" style="left:1699px;top:231px;width:1px;height:16px;background:#9b9b9b"></div>
<div class="a" style="left:1800px;top:231px;width:1px;height:16px;background:#9b9b9b"></div>
<div class="a" style="left:25px;top:248px;width:1px;height:735px;background:#9b9b9b"></div>
<div class="a" style="left:24px;top:282px;width:2px;height:146px;background:#217346"></div>
<div class="a" style="left:26px;top:428px;width:1471px;height:555px;background:#ddebf7"></div>
<div class="a" style="left:1360px;top:664px;width:137px;height:58px;background:#ed7d31"></div>
<div class="t c" style="left:1360px;top:664px;width:137px;height:58px;line-height:58px;font-size:12px">2025-4-23：+1天</div>
<div class="t c" style="left:1px;top:264px;width:25px;height:19px;line-height:19px;font-size:13.5px">1</div>
<div class="t c" style="left:1px;top:337px;width:25px;height:19px;line-height:19px;font-size:13.5px;letter-spacing:-0.3px;color:#1e5c3a">17</div>
<div class="t c" style="left:1px;top:410px;width:25px;height:19px;line-height:19px;font-size:13.5px;letter-spacing:-0.3px;color:#1e5c3a">18</div>
<div class="t c" style="left:1px;top:469px;width:25px;height:19px;line-height:19px;font-size:13.5px;letter-spacing:-0.3px;color:#000">19</div>
<div class="t c" style="left:1px;top:528px;width:25px;height:19px;line-height:19px;font-size:13.5px;letter-spacing:-0.3px;color:#000">20</div>
<div class="t c" style="left:1px;top:587px;width:25px;height:19px;line-height:19px;font-size:13.5px;letter-spacing:-0.3px;color:#000">21</div>
<div class="t c" style="left:1px;top:646px;width:25px;height:19px;line-height:19px;font-size:13.5px;letter-spacing:-0.3px;color:#000">22</div>
<div class="t c" style="left:1px;top:705px;width:25px;height:19px;line-height:19px;font-size:13.5px;letter-spacing:-0.3px;color:#000">23</div>
<div class="t c" style="left:1px;top:764px;width:25px;height:19px;line-height:19px;font-size:13.5px;letter-spacing:-0.3px;color:#000">24</div>
<div class="t c" style="left:1px;top:823px;width:25px;height:19px;line-height:19px;font-size:13.5px;letter-spacing:-0.3px;color:#000">25</div>
<div class="t c" style="left:1px;top:882px;width:25px;height:19px;line-height:19px;font-size:13.5px;letter-spacing:-0.3px;color:#000">26</div>
<div class="t c" style="left:1px;top:941px;width:25px;height:19px;line-height:19px;font-size:13.5px;letter-spacing:-0.3px;color:#000">27</div>
<div class="a" style="left:0;top:354px;width:25px;height:1px;background:#9b9b9b"></div>
<div class="a" style="left:0;top:427px;width:25px;height:1px;background:#9b9b9b"></div>
<div class="a" style="left:0;top:486px;width:25px;height:1px;background:#9b9b9b"></div>
<div class="a" style="left:0;top:545px;width:25px;height:1px;background:#9b9b9b"></div>
<div class="a" style="left:0;top:604px;width:25px;height:1px;background:#9b9b9b"></div>
<div class="a" style="left:0;top:663px;width:25px;height:1px;background:#9b9b9b"></div>
<div class="a" style="left:0;top:722px;width:25px;height:1px;background:#9b9b9b"></div>
<div class="a" style="left:0;top:781px;width:25px;height:1px;background:#9b9b9b"></div>
<div class="a" style="left:0;top:840px;width:25px;height:1px;background:#9b9b9b"></div>
<div class="a" style="left:0;top:899px;width:25px;height:1px;background:#9b9b9b"></div>
<div class="a" style="left:0;top:958px;width:25px;height:1px;background:#9b9b9b"></div>
<div class="t c" style="left:26px;top:249px;width:112px;height:32px;line-height:32px;font-size:13.33px;font-weight:bold">Department</div>
<div class="a" style="left:121px;top:263px;width:15px;height:15px;background:linear-gradient(#fff,#e9edf2);border:1px solid #ababab;box-sizing:content-box"></div>
<svg style="left:126px;top:270px" width="7" height="4"><path d="M0 0H7L3.5 4Z" fill="#555"/></svg>
<div class="t c" style="left:139px;top:249px;width:110px;height:32px;line-height:32px;font-size:13.33px;font-weight:bold">Employee</div>
<div class="a" style="left:232px;top:263px;width:15px;height:15px;background:linear-gradient(#fff,#e9edf2);border:1px solid #ababab;box-sizing:content-box"></div>
<svg style="left:237px;top:270px" width="7" height="4"><path d="M0 0H7L3.5 4Z" fill="#555"/></svg>
<div class="t c" style="left:250px;top:249px;width:105px;height:32px;line-height:32px;font-size:13.33px;font-weight:bold">Join Date</div>
<div class="a" style="left:338px;top:263px;width:15px;height:15px;background:linear-gradient(#fff,#e9edf2);border:1px solid #ababab;box-sizing:content-box"></div>
<svg style="left:343px;top:270px" width="7" height="4"><path d="M0 0H7L3.5 4Z" fill="#555"/></svg>
<div class="t c" style="left:356px;top:249px;width:165px;height:32px;line-height:32px;font-size:13.33px;font-weight:bold">Position</div>
<div class="a" style="left:504px;top:263px;width:15px;height:15px;background:linear-gradient(#fff,#e9edf2);border:1px solid #ababab;box-sizing:content-box"></div>
<svg style="left:509px;top:270px" width="7" height="4"><path d="M0 0H7L3.5 4Z" fill="#555"/></svg>
<div class="t c" style="left:522px;top:249px;width:85px;height:32px;line-height:32px;font-size:13.33px;font-weight:bold">Grade</div>
<div class="a" style="left:590px;top:263px;width:15px;height:15px;background:linear-gradient(#fff,#e9edf2);border:1px solid #ababab;box-sizing:content-box"></div>
<svg style="left:595px;top:270px" width="7" height="4"><path d="M0 0H7L3.5 4Z" fill="#555"/></svg>
<div class="t c" style="left:608px;top:249px;width:89px;height:32px;line-height:32px;font-size:13.33px;font-weight:bold">Catalog</div>
<div class="a" style="left:680px;top:263px;width:15px;height:15px;background:linear-gradient(#fff,#e9edf2);border:1px solid #ababab;box-sizing:content-box"></div>
<svg style="left:685px;top:270px" width="7" height="4"><path d="M0 0H7L3.5 4Z" fill="#555"/></svg>
<div class="t c" style="left:698px;top:249px;width:100px;height:32px;line-height:32px;font-size:13.33px;font-weight:bold">StartDate</div>
<div class="a" style="left:781px;top:263px;width:15px;height:15px;background:linear-gradient(#fff,#e9edf2);border:1px solid #ababab;box-sizing:content-box"></div>
<svg style="left:786px;top:270px" width="7" height="4"><path d="M0 0H7L3.5 4Z" fill="#555"/></svg>
<div class="t c" style="left:799px;top:249px;width:100px;height:32px;line-height:32px;font-size:13.33px;font-weight:bold">EndDate</div>
<div class="a" style="left:882px;top:263px;width:15px;height:15px;background:linear-gradient(#fff,#e9edf2);border:1px solid #ababab;box-sizing:content-box"></div>
<svg style="left:887px;top:270px" width="7" height="4"><path d="M0 0H7L3.5 4Z" fill="#555"/></svg>
<div class="t" style="left:900px;top:249px;width:72px;height:32px;line-height:32px;font-size:13.33px;font-weight:bold;overflow:hidden;text-align:left;text-indent:9px">Quantity</div>
<div class="a" style="left:955px;top:263px;width:15px;height:15px;background:linear-gradient(#fff,#e9edf2);border:1px solid #ababab;box-sizing:content-box"></div>
<svg style="left:960px;top:270px" width="7" height="4"><path d="M0 0H7L3.5 4Z" fill="#555"/></svg>
<div class="t c" style="left:973px;top:249px;width:170px;height:32px;line-height:32px;font-size:13.33px;font-weight:bold">Note</div>
<div class="a" style="left:1126px;top:263px;width:15px;height:15px;background:linear-gradient(#fff,#e9edf2);border:1px solid #ababab;box-sizing:content-box"></div>
<svg style="left:1131px;top:270px" width="7" height="4"><path d="M0 0H7L3.5 4Z" fill="#555"/></svg>
<div class="t c" style="left:1144px;top:249px;width:215px;height:32px;line-height:32px;font-size:13.33px;font-weight:bold">Status</div>
<div class="a" style="left:1342px;top:263px;width:15px;height:15px;background:linear-gradient(#fff,#e9edf2);border:1px solid #ababab;box-sizing:content-box"></div>
<svg style="left:1347px;top:270px" width="7" height="4"><path d="M0 0H7L3.5 4Z" fill="#555"/></svg>
<div class="t c" style="left:1360px;top:249px;width:137px;height:32px;line-height:32px;font-size:13.33px;font-weight:bold">Benefit+1</div>
<div class="a" style="left:1480px;top:263px;width:15px;height:15px;background:linear-gradient(#fff,#e9edf2);border:1px solid #ababab;box-sizing:content-box"></div>
<svg style="left:1485px;top:270px" width="7" height="4"><path d="M0 0H7L3.5 4Z" fill="#555"/></svg>
<div class="t c" style="left:26px;top:282px;width:112px;height:72px;line-height:72px;font-size:12px">前厅部</div>
<div class="t c" style="left:139px;top:282px;width:110px;height:72px;line-height:72px;font-size:12px">000027.陈孔燕</div>
<div class="t c jd" style="left:250px;top:283px;width:105px;height:72px;line-height:72px">2023-10-16</div>
<div class="t c" style="left:356px;top:282px;width:165px;height:72px;line-height:72px;font-size:12px">宾客服务经理</div>
<div class="t c" style="left:522px;top:282px;width:85px;height:72px;line-height:72px;font-size:12px">06.L6</div>
<div class="t c" style="left:608px;top:282px;width:89px;height:72px;line-height:72px;font-size:12px">AL.年假</div>
<div class="t c" style="left:698px;top:282px;width:100px;height:72px;line-height:72px;font-size:12px;letter-spacing:0.3px">2025/11/14</div>
<div class="t c" style="left:799px;top:282px;width:100px;height:72px;line-height:72px;font-size:12px;letter-spacing:0.3px">2025/11/14</div>
<div class="t c" style="left:900px;top:282px;width:72px;height:72px;line-height:72px;font-size:12px">8</div>
<div class="t c" style="left:26px;top:355px;width:112px;height:72px;line-height:72px;font-size:12px">前厅部</div>
<div class="t c" style="left:139px;top:355px;width:110px;height:72px;line-height:72px;font-size:12px">000027.陈孔燕</div>
<div class="t c jd" style="left:250px;top:356px;width:105px;height:72px;line-height:72px">2023-10-16</div>
<div class="t c" style="left:356px;top:355px;width:165px;height:72px;line-height:72px;font-size:12px">宾客服务经理</div>
<div class="t c" style="left:522px;top:355px;width:85px;height:72px;line-height:72px;font-size:12px">06.L6</div>
<div class="t c" style="left:608px;top:355px;width:89px;height:72px;line-height:72px;font-size:12px">AL.年假</div>
<div class="t c" style="left:698px;top:355px;width:100px;height:72px;line-height:72px;font-size:12px;letter-spacing:0.3px">2025/11/20</div>
<div class="t c" style="left:799px;top:355px;width:100px;height:72px;line-height:72px;font-size:12px;letter-spacing:0.3px">2025/11/20</div>
<div class="t c" style="left:900px;top:355px;width:72px;height:72px;line-height:72px;font-size:12px">8</div>
<div class="t c" style="left:26px;top:428px;width:112px;height:58px;line-height:58px;font-size:12px">前厅部</div>
<div class="t c" style="left:139px;top:428px;width:110px;height:58px;line-height:58px;font-size:12px">000108.王萍</div>
<div class="t c jd" style="left:250px;top:429px;width:105px;height:58px;line-height:58px">2024-04-22</div>
<div class="t c" style="left:356px;top:428px;width:165px;height:58px;line-height:58px;font-size:12px">宾客服务主管</div>
<div class="t c" style="left:522px;top:428px;width:85px;height:58px;line-height:58px;font-size:12px">07.L7</div>
<div class="t c" style="left:608px;top:428px;width:89px;height:58px;line-height:58px;font-size:12px">AL.年假</div>
<div class="t c" style="left:698px;top:428px;width:100px;height:58px;line-height:58px;font-size:12px;letter-spacing:0.3px">2024-10-09</div>
<div class="t c" style="left:799px;top:428px;width:100px;height:58px;line-height:58px;font-size:12px;letter-spacing:0.3px">2024-10-09</div>
<div class="t c" style="left:900px;top:428px;width:72px;height:58px;line-height:58px;font-size:12px">8</div>
<div class="t c" style="left:26px;top:487px;width:112px;height:58px;line-height:58px;font-size:12px">前厅部</div>
<div class="t c" style="left:139px;top:487px;width:110px;height:58px;line-height:58px;font-size:12px">000108.王萍</div>
<div class="t c jd" style="left:250px;top:488px;width:105px;height:58px;line-height:58px">2024-04-22</div>
<div class="t c" style="left:356px;top:487px;width:165px;height:58px;line-height:58px;font-size:12px">宾客服务主管</div>
<div class="t c" style="left:522px;top:487px;width:85px;height:58px;line-height:58px;font-size:12px">07.L7</div>
<div class="t c" style="left:608px;top:487px;width:89px;height:58px;line-height:58px;font-size:12px">AL.年假</div>
<div class="t c" style="left:698px;top:487px;width:100px;height:58px;line-height:58px;font-size:12px;letter-spacing:0.3px">2024-11-15</div>
<div class="t c" style="left:799px;top:487px;width:100px;height:58px;line-height:58px;font-size:12px;letter-spacing:0.3px">2024-11-16</div>
<div class="t c" style="left:900px;top:487px;width:72px;height:58px;line-height:58px;font-size:12px">16</div>
<div class="t c" style="left:26px;top:546px;width:112px;height:58px;line-height:58px;font-size:12px">前厅部</div>
<div class="t c" style="left:139px;top:546px;width:110px;height:58px;line-height:58px;font-size:12px">000108.王萍</div>
<div class="t c jd" style="left:250px;top:547px;width:105px;height:58px;line-height:58px">2024-04-22</div>
<div class="t c" style="left:356px;top:546px;width:165px;height:58px;line-height:58px;font-size:12px">宾客服务主管</div>
<div class="t c" style="left:522px;top:546px;width:85px;height:58px;line-height:58px;font-size:12px">07.L7</div>
<div class="t c" style="left:608px;top:546px;width:89px;height:58px;line-height:58px;font-size:12px">AL.年假</div>
<div class="t c" style="left:698px;top:546px;width:100px;height:58px;line-height:58px;font-size:12px;letter-spacing:0.3px">2024-11-20</div>
<div class="t c" style="left:799px;top:546px;width:100px;height:58px;line-height:58px;font-size:12px;letter-spacing:0.3px">2024-11-20</div>
<div class="t c" style="left:900px;top:546px;width:72px;height:58px;line-height:58px;font-size:12px">8</div>
<div class="t c" style="left:26px;top:605px;width:112px;height:58px;line-height:58px;font-size:12px">前厅部</div>
<div class="t c" style="left:139px;top:605px;width:110px;height:58px;line-height:58px;font-size:12px">000108.王萍</div>
<div class="t c jd" style="left:250px;top:606px;width:105px;height:58px;line-height:58px">2024-04-22</div>
<div class="t c" style="left:356px;top:605px;width:165px;height:58px;line-height:58px;font-size:12px">宾客服务主管</div>
<div class="t c" style="left:522px;top:605px;width:85px;height:58px;line-height:58px;font-size:12px">07.L7</div>
<div class="t c" style="left:608px;top:605px;width:89px;height:58px;line-height:58px;font-size:12px">AL.年假</div>
<div class="t c" style="left:698px;top:605px;width:100px;height:58px;line-height:58px;font-size:12px;letter-spacing:0.3px">2024-12-20</div>
<div class="t c" style="left:799px;top:605px;width:100px;height:58px;line-height:58px;font-size:12px;letter-spacing:0.3px">2024-12-20</div>
<div class="t c" style="left:900px;top:605px;width:72px;height:58px;line-height:58px;font-size:12px">4</div>
<div class="t c" style="left:26px;top:664px;width:112px;height:58px;line-height:58px;font-size:12px">前厅部</div>
<div class="t c" style="left:139px;top:664px;width:110px;height:58px;line-height:58px;font-size:12px">000108.王萍</div>
<div class="t c jd" style="left:250px;top:665px;width:105px;height:58px;line-height:58px">2024-04-22</div>
<div class="t c" style="left:356px;top:664px;width:165px;height:58px;line-height:58px;font-size:12px">宾客服务主管</div>
<div class="t c" style="left:522px;top:664px;width:85px;height:58px;line-height:58px;font-size:12px">07.L7</div>
<div class="t c" style="left:608px;top:664px;width:89px;height:58px;line-height:58px;font-size:12px">AL.年假</div>
<div class="t c" style="left:698px;top:664px;width:100px;height:58px;line-height:58px;font-size:12px;letter-spacing:0.3px">2025-06-20</div>
<div class="t c" style="left:799px;top:664px;width:100px;height:58px;line-height:58px;font-size:12px;letter-spacing:0.3px">2025-06-20</div>
<div class="t c" style="left:900px;top:664px;width:72px;height:58px;line-height:58px;font-size:12px">8</div>
<div class="t c" style="left:26px;top:723px;width:112px;height:58px;line-height:58px;font-size:12px">前厅部</div>
<div class="t c" style="left:139px;top:723px;width:110px;height:58px;line-height:58px;font-size:12px">000108.王萍</div>
<div class="t c jd" style="left:250px;top:724px;width:105px;height:58px;line-height:58px">2024-04-22</div>
<div class="t c" style="left:356px;top:723px;width:165px;height:58px;line-height:58px;font-size:12px">宾客服务主管</div>
<div class="t c" style="left:522px;top:723px;width:85px;height:58px;line-height:58px;font-size:12px">07.L7</div>
<div class="t c" style="left:608px;top:723px;width:89px;height:58px;line-height:58px;font-size:12px">AL.年假</div>
<div class="t c" style="left:698px;top:723px;width:100px;height:58px;line-height:58px;font-size:12px;letter-spacing:0.3px">2025/11/10</div>
<div class="t c" style="left:799px;top:723px;width:100px;height:58px;line-height:58px;font-size:12px;letter-spacing:0.3px">2025/11/10</div>
<div class="t c" style="left:900px;top:723px;width:72px;height:58px;line-height:58px;font-size:12px">8</div>
<div class="t c" style="left:26px;top:782px;width:112px;height:58px;line-height:58px;font-size:12px">前厅部</div>
<div class="t c" style="left:139px;top:782px;width:110px;height:58px;line-height:58px;font-size:12px">000108.王萍</div>
<div class="t c jd" style="left:250px;top:783px;width:105px;height:58px;line-height:58px">2024-04-22</div>
<div class="t c" style="left:356px;top:782px;width:165px;height:58px;line-height:58px;font-size:12px">宾客服务主管</div>
<div class="t c" style="left:522px;top:782px;width:85px;height:58px;line-height:58px;font-size:12px">07.L7</div>
<div class="t c" style="left:608px;top:782px;width:89px;height:58px;line-height:58px;font-size:12px">AL.年假</div>
<div class="t c" style="left:698px;top:782px;width:100px;height:58px;line-height:58px;font-size:12px;letter-spacing:0.3px">2025/11/16</div>
<div class="t c" style="left:799px;top:782px;width:100px;height:58px;line-height:58px;font-size:12px;letter-spacing:0.3px">2025/11/17</div>
<div class="t c" style="left:900px;top:782px;width:72px;height:58px;line-height:58px;font-size:12px">16</div>
<div class="t c" style="left:26px;top:841px;width:112px;height:58px;line-height:58px;font-size:12px">前厅部</div>
<div class="t c" style="left:139px;top:841px;width:110px;height:58px;line-height:58px;font-size:12px">000036.赵梓淇</div>
<div class="t c jd" style="left:250px;top:842px;width:105px;height:58px;line-height:58px">2023-11-01</div>
<div class="t c" style="left:356px;top:841px;width:165px;height:58px;line-height:58px;font-size:12px">行李员</div>
<div class="t c" style="left:522px;top:841px;width:85px;height:58px;line-height:58px;font-size:12px">09.L9</div>
<div class="t c" style="left:608px;top:841px;width:89px;height:58px;line-height:58px;font-size:12px">AL.年假</div>
<div class="t c" style="left:698px;top:841px;width:100px;height:58px;line-height:58px;font-size:12px;letter-spacing:0.3px">2023-12-29</div>
<div class="t c" style="left:799px;top:841px;width:100px;height:58px;line-height:58px;font-size:12px;letter-spacing:0.3px">2023-12-29</div>
<div class="t c" style="left:900px;top:841px;width:72px;height:58px;line-height:58px;font-size:12px">8</div>
<div class="t c" style="left:26px;top:900px;width:112px;height:58px;line-height:58px;font-size:12px">前厅部</div>
<div class="t c" style="left:139px;top:900px;width:110px;height:58px;line-height:58px;font-size:12px">000036.赵梓淇</div>
<div class="t c jd" style="left:250px;top:901px;width:105px;height:58px;line-height:58px">2023-11-01</div>
<div class="t c" style="left:356px;top:900px;width:165px;height:58px;line-height:58px;font-size:12px">行李员</div>
<div class="t c" style="left:522px;top:900px;width:85px;height:58px;line-height:58px;font-size:12px">09.L9</div>
<div class="t c" style="left:608px;top:900px;width:89px;height:58px;line-height:58px;font-size:12px">AL.年假</div>
<div class="t c" style="left:698px;top:900px;width:100px;height:58px;line-height:58px;font-size:12px;letter-spacing:0.3px">2024-05-17</div>
<div class="t c" style="left:799px;top:900px;width:100px;height:58px;line-height:58px;font-size:12px;letter-spacing:0.3px">2024-05-17</div>
<div class="t c" style="left:900px;top:900px;width:72px;height:58px;line-height:58px;font-size:12px">8</div>
<div class="a" style="left:973px;top:282px;width:170px;height:145px;overflow:hidden"><div class="t c" style="left:0;top:-25px;width:170px;line-height:16px;font-size:12px;white-space:normal">25年应享有8.5天<br>已使用5天<br>剩余3.5天</div></div>
<div class="t c" style="left:973px;top:528.5px;width:170px;line-height:16px;font-size:12px;white-space:normal">24年应享有4.5天<br>24年使用4.5天</div>
<div class="t c" style="left:973px;top:728.0px;width:170px;line-height:16px;font-size:12px;white-space:normal">25年应享有8天<br>已使用4天<br>剩余4天</div>
<div class="t c" style="left:973px;top:846.0px;width:170px;line-height:16px;font-size:12px;white-space:normal">23年应享有0.5天<br>使用1天<br>多休0.5天</div>
<div class="a" style="left:973px;top:900px;width:170px;height:82px;overflow:hidden"><div class="t c" style="left:0;top:72px;width:170px;line-height:16px;font-size:12px;white-space:normal">24年应享有7.5天<br>已使用7.5天</div></div>
<div class="a" style="left:26px;top:354px;width:947px;height:1px;background:#000"></div>
<div class="a" style="left:1143px;top:354px;width:355px;height:1px;background:#000"></div>
<div class="a" style="left:26px;top:427px;width:1472px;height:1px;background:#000"></div>
<div class="a" style="left:26px;top:486px;width:947px;height:1px;background:#000"></div>
<div class="a" style="left:1143px;top:486px;width:355px;height:1px;background:#000"></div>
<div class="a" style="left:26px;top:545px;width:947px;height:1px;background:#000"></div>
<div class="a" style="left:1143px;top:545px;width:355px;height:1px;background:#000"></div>
<div class="a" style="left:26px;top:604px;width:947px;height:1px;background:#000"></div>
<div class="a" style="left:1143px;top:604px;width:355px;height:1px;background:#000"></div>
<div class="a" style="left:26px;top:663px;width:1472px;height:1px;background:#000"></div>
<div class="a" style="left:26px;top:722px;width:947px;height:1px;background:#000"></div>
<div class="a" style="left:1143px;top:722px;width:355px;height:1px;background:#000"></div>
<div class="a" style="left:26px;top:781px;width:947px;height:1px;background:#000"></div>
<div class="a" style="left:1143px;top:781px;width:355px;height:1px;background:#000"></div>
<div class="a" style="left:26px;top:840px;width:1472px;height:1px;background:#000"></div>
<div class="a" style="left:26px;top:899px;width:1472px;height:1px;background:#000"></div>
<div class="a" style="left:26px;top:958px;width:947px;height:1px;background:#000"></div>
<div class="a" style="left:1143px;top:958px;width:355px;height:1px;background:#000"></div>
<div class="a" style="left:138px;top:248px;width:1px;height:735px;background:#000"></div>
<div class="a" style="left:249px;top:248px;width:1px;height:735px;background:#000"></div>
<div class="a" style="left:355px;top:248px;width:1px;height:735px;background:#000"></div>
<div class="a" style="left:521px;top:248px;width:1px;height:735px;background:#000"></div>
<div class="a" style="left:607px;top:248px;width:1px;height:735px;background:#000"></div>
<div class="a" style="left:697px;top:248px;width:1px;height:735px;background:#000"></div>
<div class="a" style="left:798px;top:248px;width:1px;height:735px;background:#000"></div>
<div class="a" style="left:899px;top:248px;width:1px;height:735px;background:#000"></div>
<div class="a" style="left:972px;top:248px;width:1px;height:735px;background:#000"></div>
<div class="a" style="left:1143px;top:248px;width:1px;height:735px;background:#000"></div>
<div class="a" style="left:1359px;top:248px;width:1px;height:735px;background:#000"></div>
<div class="a" style="left:1497px;top:248px;width:1px;height:735px;background:#000"></div>
<div class="a" style="left:0;top:281px;width:1898px;height:1px;background:#9b9b9b"></div>
<div class="a" style="left:971px;top:282px;width:170px;height:145px;border:2px solid #217346;border-top:0;box-sizing:content-box"></div>
<div class="a" style="left:1140px;top:424px;width:5px;height:5px;background:#217346;border:1px solid #fff;box-sizing:content-box"></div>
<div class="a" style="left:1898px;top:247px;width:1px;height:736px;background:#9b9b9b"></div>
<div class="a" style="left:0;top:982px;width:1899px;height:1px;background:#9b9b9b"></div>
<div class="a" style="left:1902px;top:248px;width:15px;height:719px;background:#dcdcdc"></div>
<div class="a" style="left:1902px;top:233px;width:15px;height:15px;background:#fff;border:1px solid #ababab;box-sizing:border-box"></div>
<svg style="left:1906px;top:238px" width="7" height="4"><path d="M0 4H7L3.5 0Z" fill="#666"/></svg>
<div class="a" style="left:1902px;top:967px;width:15px;height:15px;background:#fff;border:1px solid #ababab;box-sizing:border-box"></div>
<svg style="left:1906px;top:973px" width="7" height="4"><path d="M0 0H7L3.5 4Z" fill="#666"/></svg>
<div class="a" style="left:1902px;top:483px;width:15px;height:171px;background:#fff;border:1px solid #ababab;box-sizing:border-box"></div>
<!-- p_bottom -->
<div class="a" style="left:0px;top:983px;width:1920px;height:27px;background:#e6e6e6"></div>
<svg style="left:27px;top:991px" width="5" height="8" viewBox="0 0 5 8"><path d="M5 0V8L0 4Z" fill="#c6c6c6"/></svg>
<svg style="left:56px;top:991px" width="5" height="8" viewBox="0 0 5 8"><path d="M0 0V8L5 4Z" fill="#c6c6c6"/></svg>
<div class="a" style="left:100px;top:982px;width:42px;height:23px;background:#fff"></div>
<div class="a" style="left:100px;top:1005px;width:42px;height:2px;background:#217346"></div>
<div class="t c" style="left:100px;top:985px;width:42px;height:18px;line-height:18px;font-size:13.5px;color:#217346">FO</div>
<svg style="left:174px;top:987px" width="18" height="18" viewBox="0 0 18 18"><circle cx="9" cy="9" r="8" fill="none" stroke="#777" stroke-width="1.1"/><path d="M9 5V13M5 9H13" stroke="#666" stroke-width="1.6"/></svg>
<div class="a" style="left:1416px;top:990px;width:2px;height:2px;background:#b0b0b0"></div>
<div class="a" style="left:1416px;top:994px;width:2px;height:2px;background:#b0b0b0"></div>
<div class="a" style="left:1416px;top:998px;width:2px;height:2px;background:#b0b0b0"></div>
<div class="a" style="left:1447px;top:989px;width:434px;height:15px;background:#dadada"></div>
<div class="a" style="left:1433px;top:989px;width:15px;height:15px;background:#fff;border:1px solid #ababab;box-sizing:border-box"></div>
<svg style="left:1438px;top:993px" width="4" height="7" viewBox="0 0 4 7"><path d="M4 0V7L0 3.5Z" fill="#555"/></svg>
<div class="a" style="left:1448px;top:989px;width:404px;height:15px;background:#fff;border:1px solid #ababab;box-sizing:border-box"></div>
<div class="a" style="left:1883px;top:989px;width:15px;height:15px;background:#fff;border:1px solid #ababab;box-sizing:border-box"></div>
<svg style="left:1889px;top:993px" width="4" height="7" viewBox="0 0 4 7"><path d="M0 0V7L4 3.5Z" fill="#555"/></svg>
<div class="a" style="left:0px;top:1010px;width:1920px;height:22px;background:#f3f3f3"></div>
<div class="a" style="left:0px;top:1010px;width:1920px;height:1px;background:#d6d6d6"></div>
<div class="t" style="left:7px;top:1011px;height:18px;line-height:18px;font-size:12px;color:#333">选定目标区域，然后按 ENTER 或选择“粘贴”</div>
<div class="a" style="left:1629px;top:1011px;width:38px;height:21px;background:#c8c8c8"></div>
<svg style="left:1641px;top:1014px" width="13" height="12" viewBox="0 0 13 12"><path d="M0.5 0.5H12.5V11.5H0.5ZM4.5 0.5V11.5M8.5 0.5V11.5M0.5 4.5H12.5M0.5 8" fill="none" stroke="#555" stroke-width="1"/><path d="M0.5 8H12.5" stroke="#555"/></svg>
<svg style="left:1679px;top:1014px" width="13" height="12" viewBox="0 0 13 12"><path d="M0.5 0.5H12.5V11.5H0.5Z" fill="none" stroke="#666"/><path d="M3.5 3.5H9.5V9.5H3.5ZM5 5.5H8M5 7.5H8" fill="none" stroke="#666"/></svg>
<svg style="left:1717px;top:1014px" width="13" height="12" viewBox="0 0 13 12"><path d="M0.5 0.5H12.5V11.5H0.5Z" fill="none" stroke="#666"/><path d="M4.5 0.5V6.5H12.5M8.5 0.5V6.5" fill="none" stroke="#666"/></svg>
<div class="a" style="left:1747px;top:1020px;width:6px;height:2px;background:#555"></div>
<div class="a" style="left:1758px;top:1021px;width:100px;height:1px;background:#b5b5b5"></div>
<div class="a" style="left:1806px;top:1015px;width:4px;height:12px;background:#666"></div>
<div class="a" style="left:1861px;top:1020px;width:8px;height:2px;background:#555"></div>
<div class="a" style="left:1864px;top:1017px;width:2px;height:8px;background:#555"></div>
<div class="t" style="left:1880px;top:1012px;height:18px;line-height:18px;font-size:12px;color:#333">100%</div>
<div class="a" style="left:0px;top:1032px;width:1920px;height:48px;background:#c6ebd9"></div>
<div class="a" style="left:0px;top:1032px;width:1920px;height:1px;background:#a9c9ba"></div>
<svg style="left:19px;top:1044px" width="26" height="18" viewBox="0 0 26 18"><defs><linearGradient id="cl" x1="0" y1="0" x2="0" y2="1"><stop offset="0" stop-color="#dfe8fb"/><stop offset="1" stop-color="#a9c0f2"/></linearGradient></defs><path d="M5.5 17C2 17 0.5 14.8 0.5 12.8C0.5 10.5 2.3 8.8 4.6 8.8C5 5 8 2.5 11.5 2.5C14.5 2.5 16.8 4.2 17.8 6.8C21.5 6.3 24.5 8.8 24.5 12C24.5 15 22.3 17 19.5 17Z" fill="url(#cl)" stroke="#8aa8ec" stroke-width="0.9"/></svg>
<div class="t" style="left:50px;top:1040px;height:16px;line-height:16px;font-size:11.5px;color:#1a1a1a">12°C</div>
<div class="t" style="left:50px;top:1056px;height:16px;line-height:16px;font-size:12px;color:#444">阴</div>
<svg style="left:639px;top:1045px" width="23" height="23" viewBox="0 0 23 23"><defs><linearGradient id="wg" x1="0" y1="0" x2="1" y2="1"><stop offset="0" stop-color="#5bd0ff"/><stop offset="1" stop-color="#0067c8"/></linearGradient></defs><rect x="0" y="0" width="11" height="11" fill="url(#wg)"/><rect x="12" y="0" width="11" height="11" fill="#1f95e6"/><rect x="0" y="12" width="11" height="11" fill="#1f95e6"/><rect x="12" y="12" width="11" height="11" fill="#0a6fd0"/></svg>
<div class="a" style="left:675.5px;top:1040px;width:219px;height:32px;background:#eef9f3;border-radius:16px;border:1px solid #bfdfd0;box-sizing:border-box"></div>
<svg style="left:686px;top:1046px" width="17" height="17" viewBox="0 0 17 17"><circle cx="7" cy="7" r="5.7" fill="none" stroke="#222" stroke-width="1.7"/><path d="M11.2 11.2L15.3 15.3" stroke="#222" stroke-width="2" stroke-linecap="round"/></svg>
<div class="t" style="left:712px;top:1047px;height:18px;line-height:18px;font-size:14px;color:#444">搜索</div>
<svg style="left:843px;top:1045px" width="23" height="23" viewBox="0 0 23 23"><defs><linearGradient id="sh" x1="0" y1="0" x2="1" y2="1"><stop offset="0" stop-color="#f7d79c"/><stop offset="1" stop-color="#dfa353"/></linearGradient></defs><path d="M0.6 9.2Q1.2 4.5 3.8 2.8Q7 1.6 10.9 2.2Q14 0.6 17.4 0.8Q21 1 20.6 3.6Q20.6 6 19.3 7.8Q17.5 10 14.7 10.9Q12.5 13 10.9 15.8Q8.5 19 6 19.4Q4.5 17 3.8 14.6Q1 12.5 0.6 9.2Z" fill="url(#sh)"/><path d="M14.5 4.5Q17.5 2.2 19.3 2.6Q20.2 4.8 18.6 7.2Q16.5 9.4 14.4 9.8Q16.2 7 14.5 4.5Z" fill="#d99a4a"/><path d="M10.9 2.6L5 10.8" stroke="#ee5f85" stroke-width="2.1" fill="none"/><path d="M13.4 11.2Q15.6 15.5 18.4 18.4L21 21.2M7 15.2Q10.5 18.4 14.6 19Q17.8 19.2 20.2 18.2" stroke="#ea6a8c" stroke-width="1.5" fill="none"/><path d="M1.4 11Q3.2 9.2 5.2 10.4Q6.6 12 5.6 14.4Q4 16.2 2.2 15Q0.8 13.2 1.4 11Z" fill="#ee5b7e"/><circle cx="2.6" cy="14" r="0.9" fill="#e02f3e"/></svg>
<svg style="left:867px;top:1046px" width="23" height="20" viewBox="0 0 23 20"><defs><linearGradient id="th" x1="0" y1="0" x2="1" y2="0"><stop offset="0" stop-color="#8a7ac0"/><stop offset="0.45" stop-color="#6a5aa3"/><stop offset="1" stop-color="#43366f"/></linearGradient><linearGradient id="tb" x1="0" y1="0" x2="1" y2="0"><stop offset="0" stop-color="#9a86dc"/><stop offset="1" stop-color="#4d3f8a"/></linearGradient></defs><path d="M-0.1 12Q1.4 11.2 3 13.2L18.8 14.4Q20.6 12.2 22.2 13Q20.8 16 17.6 16.4Q14.5 18 11.2 17.4Q7 18.6 3.6 17.4Q0.6 15.4 -0.1 12Z" fill="url(#tb)"/><path d="M5.8 1.5Q11.5 -0.4 18 2.2L17.8 11.2Q11 13.2 4.2 10.4Z" fill="url(#th)"/><path d="M4.2 10.2Q11 13 17.8 11L18.4 14.2Q11.5 16.8 3.4 14Z" fill="#c4b2ef"/></svg>
<svg style="left:907px;top:1045px" width="25" height="23" viewBox="0 0 25 23"><defs><linearGradient id="tv1" x1="0" y1="0" x2="0" y2="1"><stop offset="0" stop-color="#ffffff"/><stop offset="1" stop-color="#e9e9e9"/></linearGradient><linearGradient id="tv2" x1="0" y1="0" x2="0" y2="1"><stop offset="0" stop-color="#cfcfcf"/><stop offset="1" stop-color="#9c9c9c"/></linearGradient></defs><rect x="6" y="0" width="18" height="15.5" rx="1.5" fill="url(#tv1)" stroke="#e0e0e0" stroke-width=".5"/><rect x="0" y="6" width="18" height="16" rx="1.5" fill="#2a2a2a"/><path d="M6 6H16.5Q18 6 18 7.5V15.5H7.5Q6 15.5 6 14Z" fill="url(#tv2)"/></svg>
<svg style="left:951px;top:1044px" width="24" height="22" viewBox="0 0 24 22"><path d="M0 3Q0 1 2 1H8L10.5 3.5H22Q24 3.5 24 5.5V20Q24 22 22 22H2Q0 22 0 20Z" fill="#e6a50f"/><path d="M0 7H24V20Q24 22 22 22H2Q0 22 0 20Z" fill="#ffd353"/><path d="M5 22V18Q5 16.5 6.5 16.5H17.5Q19 16.5 19 18V22Z" fill="#2a86d8"/></svg>
<svg style="left:995px;top:1044px" width="24" height="24" viewBox="0 0 24 24"><defs><linearGradient id="eg" x1="0" y1="0.2" x2="1" y2="0.5"><stop offset="0" stop-color="#2a9fec"/><stop offset="0.5" stop-color="#33c3cf"/><stop offset="1" stop-color="#5bd84f"/></linearGradient><linearGradient id="eg2" x1="0" y1="0" x2="1" y2="0.3"><stop offset="0" stop-color="#1d8ee6"/><stop offset="0.45" stop-color="#1464b8"/><stop offset="1" stop-color="#0f4a96"/></linearGradient></defs><circle cx="12" cy="12" r="12" fill="url(#eg)"/><path d="M23.9 13.2C23.6 15 23.1 15.8 22.6 16.4L24 24H21Z" fill="#c6ebd9"/><path d="M0.1 13.5C0.5 8.2 5 5.8 10 6.3C6.8 8 6.3 11.5 7.6 14.2C9.2 17.6 13 19.4 17 18.8C19.5 18.3 21.3 17.4 22.7 16.2C21.5 20.6 17.5 24 12 24C5 24 0.1 19.5 0.1 13.5Z" fill="url(#eg2)"/><path d="M9.4 11.7C9.4 9.4 11.2 8.2 13 8.5C15 9 15.4 11 14.6 12.6C14 13.8 13.6 14.6 14.6 15.6C12 15.8 9.4 14.2 9.4 11.7Z" fill="#d9f2e6"/><path d="M14 14.8C15.4 16.8 19.2 17 22.9 15.6" fill="none" stroke="#cdeedd" stroke-width="1.1"/></svg>
<svg style="left:1039px;top:1043px" width="24" height="25" viewBox="0 0 24 25"><path d="M6.3 8V4.4Q6.3 2.7 8 2.7H16Q17.7 2.7 17.7 4.4V8" fill="none" stroke="#2ab0f5" stroke-width="1.7"/><path d="M1.5 6H22.5Q24 6 24 7.5V21Q24 25 20 25H4Q0 25 0 21V7.5Q0 6 1.5 6Z" fill="#17437f"/><rect x="7" y="10" width="4.5" height="4.5" fill="#f25022"/><rect x="12.5" y="10" width="4.5" height="4.5" fill="#7fba00"/><rect x="7" y="15.5" width="4.5" height="4.5" fill="#00a4ef"/><rect x="12.5" y="15.5" width="4.5" height="4.5" fill="#ffb900"/></svg>
<svg style="left:1086px;top:1044px" width="18" height="24" viewBox="0 0 19 24" preserveAspectRatio="none"><rect x="0" y="0" width="19" height="24" rx="1.5" fill="#70788a"/><rect x="2.5" y="2.5" width="14" height="4" fill="#4cc2f1"/><g fill="#dfe3ea"><rect x="2.5" y="8.5" width="3.6" height="3.6"/><rect x="7.7" y="8.5" width="3.6" height="3.6"/><rect x="12.9" y="8.5" width="3.6" height="3.6"/><rect x="2.5" y="13.5" width="3.6" height="3.6"/><rect x="7.7" y="13.5" width="3.6" height="3.6"/><rect x="2.5" y="18.5" width="3.6" height="3.6"/><rect x="7.7" y="18.5" width="3.6" height="3.6"/></g><rect x="12.9" y="13.5" width="3.6" height="8.6" fill="#1d3f78"/></svg>
<svg style="left:1126px;top:1046px" width="26" height="22" viewBox="0 0 26 22"><ellipse cx="9" cy="8" rx="9" ry="7.5" fill="#2dc84d"/><path d="M3 13L2 17L7 14.5Z" fill="#2dc84d"/><circle cx="6" cy="6" r="1.1" fill="#1d6b2c"/><circle cx="12" cy="6" r="1.1" fill="#1d6b2c"/><ellipse cx="18" cy="14.5" rx="7.5" ry="6.3" fill="#ececec"/><circle cx="15.5" cy="13" r="0.9" fill="#aaa"/><circle cx="20.5" cy="13" r="0.9" fill="#aaa"/></svg>
<svg style="left:1171px;top:1044px" width="24" height="24" viewBox="0 0 24 24"><circle cx="12" cy="12" r="12" fill="#fbc116"/><path d="M12 12L1.6 6A12 12 0 0 1 22.4 6Z" fill="#e33b2e"/><path d="M12 12L1.6 6A12 12 0 0 0 9.5 23.7L14 15Z" fill="#2da94f"/><path d="M1.6 6H22.4" stroke="#e33b2e" stroke-width="0"/><circle cx="12" cy="12" r="5.6" fill="#fff"/><circle cx="12" cy="12" r="4.4" fill="#4a8af4"/></svg>
<svg style="left:1215px;top:1044px" width="24" height="24" viewBox="0 0 24 24"><rect x="0" y="0" width="24" height="24" rx="2.5" fill="#2a5bf0"/><path d="M6.5 4.5L12 11.5L17.5 4.5M12 11.5V20M6.5 12.5H17.5M6.5 16H17.5" stroke="#e8f0ff" stroke-width="1.9" fill="none"/></svg>
<div class="a" style="left:1288px;top:1039px;width:3px;height:35px;background:#dff3ea;border-radius:0 4px 4px 0"></div>
<div class="a" style="left:1252px;top:1037px;width:34px;height:38px;background:#e2f4ec;border-radius:4px;border:1px solid #d0e6dc;box-sizing:border-box"></div>
<svg style="left:1259px;top:1044px" width="24" height="24" viewBox="0 0 24 24"><rect x="11" y="3" width="12" height="18" fill="#fff" stroke="#217346" stroke-width="1"/><path d="M11 7.5H23M11 12H23M11 16.5H23M17 3V21" stroke="#217346" stroke-width="1"/><path d="M0 2.5L14 0V24L0 21.5Z" fill="#1e6c41"/><path d="M4.2 7.6L9.8 16.4M9.8 7.6L4.2 16.4" stroke="#fff" stroke-width="1.9"/></svg>
<div class="a" style="left:960px;top:1072px;width:6px;height:3px;background:#7f8f88;border-radius:1.5px"></div>
<div class="a" style="left:1004px;top:1072px;width:6px;height:3px;background:#7f8f88;border-radius:1.5px"></div>
<div class="a" style="left:1092px;top:1072px;width:6px;height:3px;background:#7f8f88;border-radius:1.5px"></div>
<div class="a" style="left:1136px;top:1072px;width:6px;height:3px;background:#7f8f88;border-radius:1.5px"></div>
<div class="a" style="left:1180px;top:1072px;width:6px;height:3px;background:#7f8f88;border-radius:1.5px"></div>
<div class="a" style="left:1224px;top:1072px;width:6px;height:3px;background:#7f8f88;border-radius:1.5px"></div>
<div class="a" style="left:1263px;top:1072px;width:16px;height:3px;background:#1a73d9;border-radius:1.5px"></div>
<svg style="left:1645px;top:1052px" width="12" height="8" viewBox="0 0 12 8"><path d="M1 7L6 2L11 7" fill="none" stroke="#222" stroke-width="1.5"/></svg>
<svg style="left:1674px;top:1047px" width="17" height="17" viewBox="0 0 17 17"><path d="M2.5 7A6 6 0 0 1 13.5 4.5M14 1V5H10M14.5 10A6 6 0 0 1 3.5 12.5M3 16V12H7" fill="none" stroke="#222" stroke-width="1.4"/><circle cx="13" cy="13.5" r="3.6" fill="#1773d2"/></svg>
<div class="t c" style="left:1704px;top:1047px;width:20px;height:18px;line-height:18px;font-size:14px;color:#111">中</div>
<div class="t c" style="left:1743px;top:1047px;width:20px;height:18px;line-height:18px;font-size:14px;color:#111">拼</div>
<svg style="left:1783px;top:1048px" width="17" height="17" viewBox="0 0 17 17"><path d="M0.7 0.7H11.5M0.7 0.7V11H9M6 11V15M2.5 15.3H9.5" fill="none" stroke="#222" stroke-width="1.3"/><rect x="12" y="0.7" width="3.6" height="8" rx="1" fill="none" stroke="#222" stroke-width="1.1"/><path d="M13.8 8.7V12Q13.8 14 11.5 14" fill="none" stroke="#222" stroke-width="1.1"/></svg>
<svg style="left:1807px;top:1049px" width="17" height="14" viewBox="0 0 17 14"><path d="M0.7 4.5H3.5L7 1.2V12.8L3.5 9.5H0.7Z" fill="none" stroke="#222" stroke-width="1.2"/><path d="M9.5 4.5Q11 7 9.5 9.5M11.8 2.8Q14.2 7 11.8 11.2M14 1Q17.5 7 14 13" fill="none" stroke="#222" stroke-width="1.1"/></svg>
<div class="t" style="left:1800px;top:1040px;width:101px;height:16px;line-height:16px;font-size:12px;color:#111;text-align:right">13:33</div>
<div class="t" style="left:1800px;top:1055.5px;width:101px;height:16px;line-height:16px;font-size:12px;color:#111;text-align:right">2025/12/16</div>
</div>
</body></html>
